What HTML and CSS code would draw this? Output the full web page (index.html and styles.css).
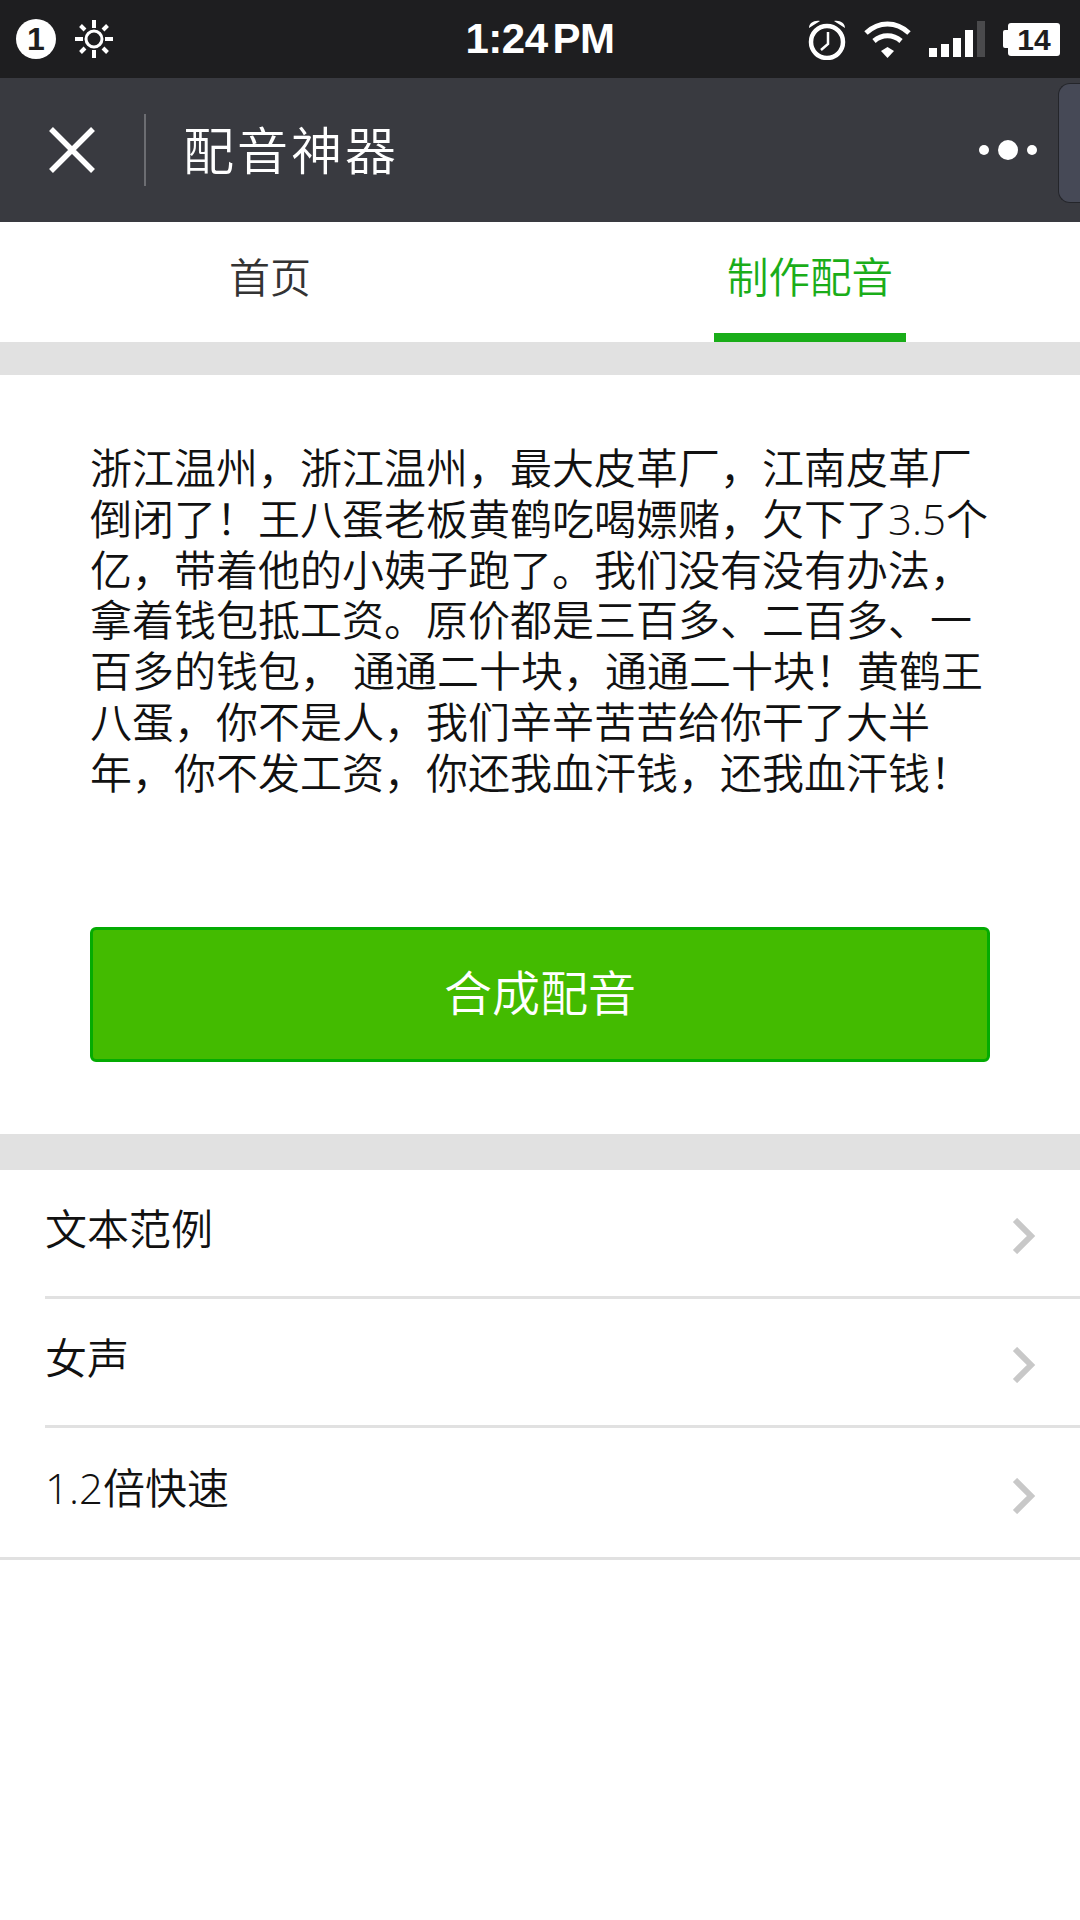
FILE: index.html
```html
<!DOCTYPE html>
<html lang="zh-CN">
<head>
	<title>配音神器</title>
	<meta charset="utf-8">
	<link rel="stylesheet" href="styles.css">
</head>
<body>

<!-- barra de estado -->
<div class="status">
	<div class="status-left">
		<span class="badge">1</span>
		<svg class="sun" width="40" height="40" viewBox="0 0 40 40" fill="none" stroke="#fff">
			<circle cx="20" cy="20" r="8" stroke-width="3"/>
			<path d="M20 1v8M20 31v8M1 20h8M31 20h8M6.500 6.500l4.500 4.500M29 29l4.500 4.500M33.500 6.500L29 11M11 29l-4.500 4.500" stroke-width="4"/>
		</svg>
	</div>
	<div class="clock">1:24<span class="ampm">PM</span></div>
	<div class="status-right">
		<svg class="alarm" width="38" height="40" viewBox="0 0 38 40" fill="none" stroke="#fff">
			<circle cx="19" cy="22" r="16" stroke-width="4.500"/>
			<path d="M20 12v12l-7 6" stroke-width="2.500"/>
			<path d="M1 8C1 3 6 0 12 1zM37 8C37 3 32 0 26 1z" fill="#fff" stroke="none"/>
		</svg>
		<svg class="wifi" width="47" height="37" viewBox="0 0 47 37" fill="none" stroke="#fff" stroke-width="5">
			<path d="M2 12c13-12 30-12 43 0"/>
			<path d="M10 20c8-7 19-7 27 0"/>
			<path d="M17 30l6.500-4 6.500 4-6.500 7z" fill="#fff" stroke="none"/>
		</svg>
		<div class="signal">
			<i class="b1"></i><i class="b2"></i><i class="b3"></i><i class="b4"></i><i class="b5"></i>
		</div>
		<div class="battery">
			<span class="nub"></span>
			<span class="level">14</span>
		</div>
	</div>
</div>

<!-- cabecera -->
<div class="nav">
	<svg class="close" width="48" height="48" viewBox="0 0 48 48" stroke="#fff" stroke-width="5.500">
		<path d="M3 3l42 42M45 3L3 45"/>
	</svg>
	<div class="nav-sep"></div>
	<div class="nav-title">配音神器</div>
	<div class="dots">
		<i class="dot"></i><i class="dot big"></i><i class="dot"></i>
	</div>
	<div class="side-handle"></div>
</div>

<div class="tabs">
	<div class="tab">首页</div>
	<div class="tab active"><span class="tab-label">制作配音</span></div>
</div>

<div class="gap"></div>

<div class="compose">
	<p class="script-text">浙江温州，浙江温州，最大皮革厂，江南皮革厂<br>倒闭了！王八蛋老板黄鹤吃喝嫖赌，欠下了3.5个<br>亿，带着他的小姨子跑了。我们没有没有办法，<br>拿着钱包抵工资。原价都是三百多、二百多、一<br>百多的钱包， 通通二十块，通通二十块！黄鹤王<br>八蛋，你不是人，我们辛辛苦苦给你干了大半<br>年，你不发工资，你还我血汗钱，还我血汗钱！</p>
	<div class="btn">合成配音</div>
</div>

<div class="gap gap2"></div>

<div class="list">
	<div class="row">
		<span class="row-label">文本范例</span>
		<svg class="chev" width="24" height="36" viewBox="0 0 24 36" fill="none" stroke="#c8c8c8" stroke-width="6"><path d="M3 2l16 16L3 34"/></svg>
	</div>
	<div class="row">
		<span class="row-label">女声</span>
		<svg class="chev" width="24" height="36" viewBox="0 0 24 36" fill="none" stroke="#c8c8c8" stroke-width="6"><path d="M3 2l16 16L3 34"/></svg>
	</div>
	<div class="row last">
		<span class="row-label">1.2倍快速</span>
		<svg class="chev" width="24" height="36" viewBox="0 0 24 36" fill="none" stroke="#c8c8c8" stroke-width="6"><path d="M3 2l16 16L3 34"/></svg>
	</div>
</div>

</body>
</html>
```
FILE: styles.css
```css
body
{
	margin: 0;
	background: #fff;
	font-family: "Liberation Sans", "Noto Sans CJK SC", sans-serif;
	color: #111;
}

/* barra de estado */
.status
{
	height: 78px;
	background: #1e1e20;
	display: grid;
	grid-template-columns: 1fr auto 1fr;
	align-items: center;
	color: #fff;
}

.status-left
{
	display: flex;
	align-items: center;
	gap: 18px;
	padding-left: 16px;
}

.badge
{
	width: 40px;
	height: 40px;
	border-radius: 50%;
	background: #fff;
	color: #1e1e20;
	font-size: 32px;
	font-weight: bold;
	line-height: 40px;
	text-align: center;
}

.clock
{
	font-size: 42px;
	font-weight: bold;
	letter-spacing: -0.5px;
}

.ampm
{
	margin-left: 5px;
}

.status-right
{
	display: flex;
	align-items: center;
	justify-content: flex-end;
	gap: 18px;
	padding-right: 20px;
}

.alarm
{
	margin-top: 2px;
}

.signal
{
	display: flex;
	align-items: flex-end;
	gap: 4px;
	height: 36px;
}

.signal i
{
	width: 8px;
	background: #fff;
}

.b1 { height: 9px; }
.b2 { height: 13px; }
.b3 { height: 19px; }
.b4 { height: 27px; }
.signal .b5 { height: 36px; background: #4a4a4c; }

.battery
{
	display: flex;
	align-items: center;
}

.nub
{
	width: 5px;
	height: 18px;
	background: #fff;
	border-radius: 2px 0 0 2px;
}

.level
{
	width: 52px;
	height: 33px;
	background: #fff;
	border-radius: 3px;
	color: #1e1e20;
	font-size: 30px;
	font-weight: bold;
	line-height: 33px;
	text-align: center;
}

/* cabecera */
.nav
{
	height: 144px;
	background: #393a40;
	display: flex;
	align-items: center;
	position: relative;
	color: #fff;
}

.close
{
	margin-left: 48px;
}

.nav-sep
{
	width: 2px;
	height: 72px;
	background: #6c6d72;
	margin-left: 48px;
}

.nav-title
{
	font-size: 51px;
	font-weight: 350;
	letter-spacing: 3px;
	margin-left: 37px;
	margin-top: -4px;
}

.dots
{
	display: flex;
	align-items: center;
	gap: 9px;
	margin-left: auto;
	margin-right: 43px;
}

.dot
{
	width: 10px;
	height: 10px;
	border-radius: 50%;
	background: #fff;
}

.dot.big
{
	width: 20px;
	height: 20px;
}

.side-handle
{
	position: absolute;
	top: 5px;
	right: 0;
	width: 21px;
	height: 118px;
	background: #464956;
	border: 1px solid #24252a;
	border-right: none;
	border-radius: 12px 0 0 12px;
}

/* pestanas */
.tabs
{
	height: 120px;
	display: flex;
}

.tab
{
	flex: 1;
	display: flex;
	justify-content: center;
	align-items: stretch;
	font-size: 41px;
	font-weight: 350;
	line-height: 114px;
	color: #333;
}

.tab.active
{
	color: #1aad19;
}

.tab-label
{
	width: 192px;
	text-align: center;
	font-size: 41.500px;
	border-bottom: 9px solid #1aad19;
}

.gap
{
	height: 33px;
	background: #e1e1e1;
}

.gap2
{
	height: 36px;
}

.compose
{
	height: 759px;
	padding: 68px 90px 0;
	box-sizing: border-box;
}

.script-text
{
	margin: 0;
	font-family: "Open Sans", "Noto Sans CJK SC", sans-serif;
	font-size: 42px;
	font-weight: 350;
	line-height: 50.800px;
	height: 360px;
	white-space: nowrap;
	color: #111;
}

.btn
{
	height: 135px;
	margin-top: 124px;
	box-sizing: border-box;
	background: #43bb00;
	border: 3px solid #04ab02;
	border-radius: 6px;
	color: #fff;
	font-size: 48px;
	font-weight: 350;
	line-height: 129px;
	text-align: center;
}

/* lista */
.row
{
	height: 129px;
	margin-left: 45px;
	box-sizing: border-box;
	border-bottom: 3px solid #e1e1e1;
	display: flex;
	align-items: center;
	justify-content: space-between;
	padding-right: 44px;
}

.row.last
{
	height: 132px;
	margin-left: 0;
	padding-left: 45px;
}

.row-label
{
	font-family: "Open Sans", "Noto Sans CJK SC", sans-serif;
	font-size: 42px;
	font-weight: 350;
	margin-top: -14px;
}

.chev
{
	margin-top: 6px;
}
```
